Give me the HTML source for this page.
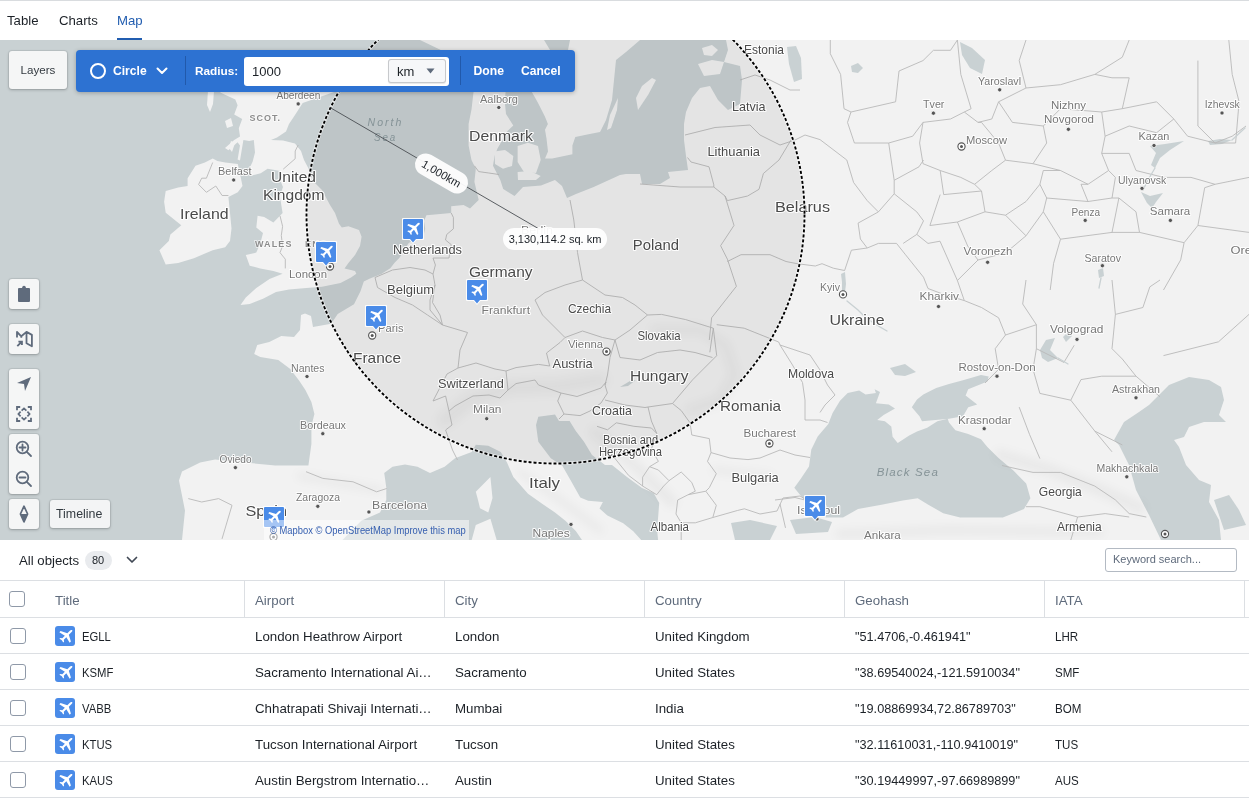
<!DOCTYPE html>
<html><head><meta charset="utf-8">
<style>
*{box-sizing:border-box;margin:0;padding:0}
html,body{width:1249px;height:798px;overflow:hidden;background:#fff;} body{font-family:"Liberation Sans",sans-serif;color:#1c2127}
.abs{position:absolute}
#topline{position:absolute;left:0;top:0;width:1249px;height:1px;background:#d9dcdf}
.tab{position:absolute;top:12px;font-size:13.2px;line-height:18px;color:#1c2127}
#map{position:absolute;left:0;top:40px;width:1249px;height:500px;overflow:hidden;background:#f2f2f2}
#map svg{position:absolute;left:0;top:0}
.btn{position:absolute;background:#f5f6f6;border-radius:3px;box-shadow:0 0 0 1px rgba(17,20,24,.06),0 1px 3px rgba(17,20,24,.25)}
#toolbar{position:absolute;left:76px;top:10px;width:499px;height:42px;background:#2d72d2;border-radius:4px;box-shadow:0 1px 4px rgba(0,0,0,.25)}
.tw{position:absolute;color:#fff;font-weight:bold;font-size:12px;line-height:16px}
.sep{position:absolute;top:6px;width:1px;height:29px;background:#2159ab}
#bar{position:absolute;left:0;top:540px;width:1249px;height:41px;background:#fff;border-bottom:1px solid #dcdfe3}
.hdr{position:absolute;top:581px;height:37px;border-bottom:1px solid #dcdfe3}
.ht{position:absolute;top:592.5px;font-size:13.3px;line-height:16px;color:#5f6b7c}
.vb{position:absolute;top:581px;width:1px;height:36px;background:#dcdfe3}
.row{position:absolute;left:0;width:1249px;height:1px;background:#dcdfe3}
.cb{position:absolute;width:16px;height:16px;border:1px solid #8f99a8;border-radius:3px;background:#fff}
.cell{position:absolute;font-size:13.3px;line-height:16px;color:#1c2127;white-space:nowrap}
.pl{position:absolute;width:20px;height:20px;border-radius:3px;background:#4a8be8}
.lbl{font-family:"Liberation Sans",sans-serif}
</style></head><body>
<div id="root" style="position:absolute;left:0;top:0;width:1249px;height:798px;will-change:transform">
<div id="topline"></div>
<div class="tab" style="left:7px">Table</div>
<div class="tab" style="left:59px">Charts</div>
<div class="tab" style="left:117px;color:#215db0">Map</div>
<div class="abs" style="left:117px;top:38px;width:25px;height:2px;background:#215db0"></div>

<div id="map">
<svg width="1249" height="540" viewBox="0 0 1249 540" style="top:-40px">
<g id="water" fill="#c9d1d3">
<path d="M0,40 L420,40 L445,52 L474,88 L471.5,109.6 L468.6,124 L468.6,145.6 L471.5,160 L475.8,168.7 L474.4,181.7 L478.7,200 L470,208.5 L463.6,205.1 L451.2,206.3 L451.2,213 L437.6,214.2 L426.4,215.3 L424,221 L425.2,228.8 L423,237.8 L412.8,240.1 L408.3,243.5 L403.8,251.4 L399.3,258.1 L394.8,262.6 L390.3,268.3 L381.3,274 L370,278.4 L363.8,281.4 L360.5,291.2 L354,304.2 L337.7,314 L331.2,323.8 L313,327 L311,316 L305,313.5 L301,315 L300,330 L294,337 L281.3,336 L269.3,342 L257.2,345 L254.2,354 L260.3,357 L278.3,360 L290.3,369 L299.4,381 L305.4,390 L311.4,402 L314.4,414 L311.4,426 L311.4,444 L308.4,465.5 L296.4,465.5 L275.3,465.5 L245.2,462.5 L215.1,459.4 L200.1,462.5 L182,471.5 L179,480.5 L185,510.6 L182,540 L0,540 Z"/>
<path d="M506,88 L504.7,101 L506,114 L513.3,125.5 L507.5,131 L497.5,148.5 L494.6,155.7 L493,165.8 L497.5,174.5 L500.3,180 L503.2,189 L514.5,196 L523,187 L541,185.5 L555,180 L562,186 L567,198 L576,194 L593.7,187 L620,175 L626,174 L640,174 L642,184 L660,184 L670,178 L668,172 L688,170 L686,156 L684,140 L684,124 L686,112 L692,98 L700,88 L710,86 L718,100 L728,110 L740,104 L742,80 L740,66 L724,62 L728,50 L726,40 L640,40 L626,52 L616,60 L614,80 L612,100 L606,120 L600,132 L589.7,134 L575.3,137 L572.4,145.6 L572.4,154.3 L552.2,158.6 L545,158.6 L548,151.4 L546.5,138.4 L545,129.8 L547.9,124 L545,116.8 L537.8,102.4 L532,92.3 L532,88 Z"/>
<path d="M342.5,540 L361.3,520.8 L380,512.5 L386.3,500 L386.3,487.5 L384.2,473 L392.5,466.7 L405,464.6 L417.5,466.7 L430,473 L444.6,466.7 L455,458.3 L471.7,452 L475.8,444.8 L488.3,445.8 L500.8,452 L507,462.5 L513.3,477 L528,493.8 L542.5,504 L555,512.5 L565.4,520.8 L575.8,531 L582,540 Z"/>
<path d="M536,425 L538.3,416.7 L555,414.6 L559,421 L569.6,421 L575.8,431 L584,441.7 L592,455 L605,465 L612,465 L627,477 L642,488 L653.6,492.9 L659.2,503 L658.1,517.7 L657,529 L658.1,540 L641.2,540 L633.3,531.2 L623.2,523.3 L607.4,515.4 L599.5,508.6 L602.9,501.9 L588.2,500.7 L580.3,497.4 L571.3,481.6 L562.3,465.8 L550.8,458.3 L538.3,441.7 Z"/>
<path d="M840,400.8 L847.7,393 L859.2,390.5 L865.6,394.4 L875.9,393 L874.6,389.2 L880,392 L875.9,403.3 L888.7,404.6 L895,408.5 L883.6,414.9 L877.2,420 L884.9,421.3 L891.3,426.4 L892.6,436.7 L897.7,443 L909.2,435.4 L917,431.5 L927.2,427.7 L937.4,421.3 L947.7,418.7 L949,422.6 L955.4,430.3 L968.2,434.1 L981,439.2 L987.4,447 L998.5,457.9 L1013.4,470.6 L1026.2,483.4 L1030.4,498.3 L1024,509 L1002.8,517.4 L981.5,517.4 L960.2,517.4 L943.2,513.2 L928.3,504.7 L917.7,498.3 L902.8,500.4 L881.5,504.7 L858,509 L843,517.4 L826,517.4 L815.5,509 L802.8,498.3 L794.3,487.7 L800.6,479 L809,466.4 L811.3,449.4 L817.7,436.6 L828.3,424 L832.6,413 Z"/>
<path d="M911.8,407.2 L917,399.5 L923.3,394.4 L936.2,388 L949,384.1 L963,380.3 L981,375 L988.7,376.4 L987.4,381.5 L968.2,389.2 L965.6,395.6 L977.2,404.6 L968.2,407.2 L963,416.2 L949,418.7 L922,421.3 L919.5,416.2 Z"/>
<path d="M1169,385 L1189,377 L1209,380 L1221,387 L1224,400 L1219,415 L1226,422 L1204,422 L1189,427 L1184,437 L1174,440 L1179,447 L1186,465 L1199,480 L1211,485 L1209,502 L1219,520 L1221,540 L1161,540 L1149,515 L1136,490 L1129,465 L1119,445 L1114,440 L1124,422 L1139,412 L1149,405 L1159,395 Z"/>
<path d="M1214,500 L1229,495 L1239,510 L1246,525 L1224,530 L1219,515 Z"/>
<path d="M731,523 L750,520 L777,526 L770,540 L735,540 Z"/>
<path d="M790,520 L815,517 L832,522 L828,532 L796,534 Z"/>
<path d="M960,42 L972,48 L985,60 L982,74 L970,68 L962,55 Z"/>
<path d="M851,66 L858,63 L863,68 L858,73 L852,72 Z"/>
<path d="M1150,146 L1165,144 L1184,141 L1170,150 L1160,158 L1155,168 L1151,165 L1156,153 Z"/>
<path d="M1141,192 L1150,196 L1163,193 L1156,202 L1152,208 L1147,203 Z"/>
<path d="M1208,141 L1220,139 L1232,140 L1222,144 L1210,145 Z"/>
<path d="M1040,350 L1046,340 L1055,338 L1050,350 L1058,358 L1048,362 L1042,358 Z"/>
<path d="M1063,337 L1070,330 L1072,336 L1066,342 Z"/>
<path d="M841,274 L845,272 L846,284 L845,292 L842,291 L842,282 Z"/>
<path d="M890,368 L905,364 L916,372 L905,376 L895,375 Z"/>
<path d="M1098,270 L1103,268 L1104,276 L1099,278 Z"/>
<path d="M787,47 L796,46 L801,58 L802,79 L794,82 L789,64 Z"/>
<path d="M620,387 L630,381 L636,380 L628,386 Z"/>

<path d="M544,40 L570,40 L568,50 L550,50 Z"/>
</g>
<g id="land" fill="#f2f2f2">
<path d="M208,91 L214,91 L213,104 L210,112 L207,105 Z"/><path d="M225,121 L231,118 L233,126 L227,128 Z"/><path d="M231,141 L235,143 L232,152 L229,148 Z"/>
<path d="M220,88 L336,88 L334,92 L302.7,103 L295,115 L289,124 L286,131.6 L277,137.6 L271,140 L283,140.6 L295,143.6 L301,151 L304,160 L308.8,169 L313,181 L322,190 L330,205 L335,213 L339,223.7 L341.8,227.6 L348.4,226.3 L359,230 L361.6,236.8 L360,246 L355,255 L348.4,263 L344.5,268.4 L355,271 L356.3,273.7 L351,277.6 L340.5,283 L322,286.8 L306.3,288 L289,289.5 L276,292 L263,298.7 L249.7,304 L240.5,305 L245.8,297.4 L256.3,288 L269.5,279 L282.6,273.7 L273.4,271 L260.3,268.4 L249.7,265.8 L245.8,255 L256.3,252.6 L260.3,243.4 L263,233 L256.3,227.6 L257.6,215.8 L264.2,217 L273.4,222.4 L282.6,213 L281.3,205 L280,196 L283,187 L280,179.7 L280.3,171 L267.6,168.7 L260.7,173.3 L251.5,175.6 L249.2,168.7 L252.6,161.8 L255,152.6 L253.8,139.9 L249.2,141 L243.4,139.9 L240,160.6 L237.6,159.5 L240,145.6 L237.6,142.2 L228.4,150.2 L225,148 L234.2,139.9 L240,136.4 L238.8,128.3 L242.2,119 L234.2,114.5 L237.6,105.3 L235.3,99.5 L220.3,92.6 L220,88 Z"/>
<path d="M187.6,178.2 L195.5,165.7 L204.9,162.5 L212.7,158.6 L217.4,161 L225.2,162.5 L237.8,164.1 L240.9,178.2 L242.5,186 L237.8,192.3 L228.4,197 L230,212.7 L231.5,228.4 L230,240.9 L225.2,247.2 L212.7,250.3 L193.9,258.2 L178.2,262.9 L165.7,264.4 L159.4,250.3 L168.8,240.9 L170.4,234.6 L181.3,225.2 L165.7,212.7 L164.1,201.7 L165.7,191 L178.2,187.6 L187.6,186 Z"/>
<path d="M494.6,151.4 L505,150 L513.3,156 L512,166 L503,168.7 L495,164 Z"/>
<path d="M517.6,146 L528,142.8 L538,146 L540.7,160 L536,173 L524,172 L517.6,162 Z"/>
<path d="M517.6,172 L530,171 L540.7,176 L536,180 L518,180 Z"/>
<path d="M607,130 L610,115 L618,98 L617,110 L611,128 Z"/>
<path d="M652,78 L656,80 L648,95 L638,110 L636,98 L642,86 Z"/>
<path d="M698,64 L712,60 L724,62 L720,74 L704,76 L701,70 Z"/><path d="M702,48 L712,45 L718,50 L712,56 L704,55 Z"/>
<path d="M475.8,491.7 L490.4,477 L492.5,498 L488.3,512.5 L480,508.3 L478,500 Z"/>
<path d="M475.8,525 L490.4,518.75 L496.7,540 L471.7,540 Z"/>
</g>

<defs><filter id="blr" x="-20%" y="-20%" width="140%" height="140%"><feGaussianBlur stdDeviation="4"/></filter></defs>
<g filter="url(#blr)" fill="none" stroke="#000" stroke-opacity="0.035" stroke-linecap="round" stroke-linejoin="round">
<polyline points="445,420 470,400 510,388 560,386 600,380" stroke-width="16"/>
<polyline points="655,330 700,330 725,345 735,375 720,400 690,410" stroke-width="10"/>
<polyline points="595,432 640,470 672,502" stroke-width="12"/>
<polyline points="715,470 770,476" stroke-width="7"/>
<polyline points="1000,455 1050,470 1100,490 1140,508" stroke-width="12"/>
<polyline points="300,476 380,490" stroke-width="7"/>
<polyline points="520,472 560,500 600,530" stroke-width="7"/>
<polyline points="840,534 950,530 1100,532" stroke-width="9"/>
</g>

<g fill="none" stroke="#b9b9b9" stroke-width="0.9" stroke-linejoin="round">
<polyline points="451.2,213 453.4,217.5 453.4,228.8 446.7,234.5 445.5,240 451.2,244.6 449,258 433,258 435.4,265 433,274 435,285 432.5,302.5 440,315 442.5,325"/>
<polyline points="375,277.5 392.5,270 410,267.5 425,270 433,274"/>
<polyline points="375,277.5 377.5,287.5 395,297.5 412.5,305 427.5,315 442.5,325"/>
<polyline points="435,285 430,300 430,310 442.5,325"/>
<polyline points="442.5,325 467.5,332.5 460,350 458,368"/>
<polyline points="458,368 447,374 433,401 445.6,396 449,411 452,425 445.6,430 452.5,450 457.5,460"/>
<polyline points="458,368 476,363 495,369 506,371 508,390"/>
<polyline points="506,371 516,367.6 538.5,364.4 549.7,366 546.5,353 560,342.5 565,337.5"/>
<polyline points="570,200 573.8,220 577.5,252.5 582.5,280"/>
<polyline points="582.5,280 565,285 545,292.5 535,300 542.5,315 557.5,330 565,337.5"/>
<polyline points="582.5,280 605,295 622.5,297.5 635,305 647.5,315"/>
<polyline points="565,337.5 582.5,331 602.5,337.5 615,340"/>
<polyline points="647.5,315 661.6,314.4 685.7,319.6 713.3,328.2"/>
<polyline points="647.5,315 630,330 615,340"/>
<polyline points="615,340 620,357.5 640,360 657.5,352.5 680,350 695,352.5 712.5,357.5"/>
<polyline points="615,340 610,357.5 607.5,375 605,385"/>
<polyline points="508,390 516,383.6 535,380 538.5,385 561,393 577,396.5 601,388 606,382 605,385"/>
<polyline points="508,390 500,398 489,395 473,396 455,406 449,411"/>
<polyline points="561,393 557.7,401 564,414 559,419"/>
<polyline points="564,414 580,415.6 590,411 601,403 607.4,393 605,385"/>
<polyline points="605,400 625,405 645,407.5 648,407"/>
<polyline points="672.5,403.5 692.6,379.8 716.7,355.7 713.3,328.2"/>
<polyline points="597,426.3 607.5,429.8 616.3,422.8 633.9,426.3 651.4,428 656.7,433.3 651.4,449 658.4,461.4 649.6,466.7 642.6,477.2 642.6,486"/>
<polyline points="614.6,458 628.6,475.4 642.6,486 656.7,494.7 663.7,486 669,480.7 658.4,470 649.6,466.7"/>
<polyline points="669,480.7 681.2,472 691.8,482.5 695.3,491.2 688.2,494.7 677.7,500 676,514 681.2,522.8 681.2,540"/>
<polyline points="688.2,494.7 705.8,491.2 716.3,505.3 712.8,517.5 695.3,522.8 681.2,522.8"/>
<polyline points="648,407 651.4,421 656.7,433.3"/>
<polyline points="713.3,328.2 709.8,352.3"/>
<polyline points="716.7,324.7 744.2,328.2 778.7,342 780,345"/>
<polyline points="648,407 672.5,403.5 681.2,410.5 690,422.8 691.8,435 709.3,438.6 711,452.6 707.5,461.4 716.3,473.7 709.3,487.7 705.8,491.2"/>
<polyline points="712.8,517.5 737.4,510.5 744.4,508.8 760,514 777,511 783,498 800,496 810,502"/>
<polyline points="780,504 785.5,527.9"/>
<polyline points="306,471.7 322.8,478.4 353,481.8 376.6,491.8 386.7,488.5"/>
<polyline points="188.3,498.6 201.7,502 218.6,498.6 232,505.3 222,538.9"/>
<polyline points="740,80 755,75 770,80 790,90 800,90"/>
<polyline points="685,135 715,127.5 750,125 760,135 780,145 795,140 805,135"/>
<polyline points="687.5,157.5 691,162 709,166.8 713.8,184.8 713.8,187"/>
<polyline points="640,184 680,187 713.8,187 725,196"/>
<polyline points="791,140 779,160 763.4,173.5 759,189.3 747.6,196 727.4,200.6 725,196"/>
<polyline points="725,196 734,225.4 720.6,245.7 727.4,259.2 736.4,286.3 711.6,317.8 709.3,340"/>
<polyline points="727.4,261.5 741,254.7 770,254.7 786,261.5 797.2,263.7 815.3,266 822,263.7 833.3,268.2 844.6,270.5 851.4,250.2 867.2,248 878.4,243.4 896.5,243.4 905.5,254.7 923.5,277.2 928,288.5 940,293"/>
<polyline points="298.2,145 295.2,151 295.2,158.7 283.2,169.2"/>
<polyline points="280,215.8 282.6,226.3 281.3,235.5 282.6,246 280,252.6 285.3,259.2 285.3,268.4"/>
<polyline points="212.7,162.5 206.4,178.2 201.7,178.2 198.6,184.5 206.4,192.3 215.8,186 222.1,195.5 228.4,195.5"/>
<polyline points="474.4,165.8 478.7,171.6 488.8,173 498.9,174.5"/>
<polyline points="805,135 820,139.6 846.8,160 853.6,182.5 867.2,200.6 878.4,211.9 858.1,223.1 860.4,239 867.2,248"/>
<polyline points="878.4,211.9 894.2,193.8 894.2,180.3 919,166.8 923.5,160"/>
<polyline points="894.2,193.8 916.8,211.9 923.5,220.9 916.8,234.4 903.2,243.4"/>
<polyline points="916.8,234.4 928,243.4 940,241.2"/>
<polyline points="830.3,40 830.3,53.7 840.6,74.4 844,108.7 851,112 895.6,101.8 899,71 923,60.6 933.4,50.3 950.5,50.3 957.4,40"/>
<polyline points="851,112 847.5,122.4 854.4,143 888.7,143 912.7,136.2 923,122.4 950.5,119 964.3,112 978,122.4 991.8,119 998.6,101.8 1026,88 1019.2,60.6 1026,40"/>
<polyline points="957.4,40 960.8,74.4 971.1,108.7 964.3,112"/>
<polyline points="923,122.4 919.6,143 923,163.7 940.2,170.5 960.8,177.4 974.6,184.3 991.8,170.5 1005.5,160.2 998.6,143 981.5,122.4 978,122.4"/>
<polyline points="1005.5,160.2 1033,163.7 1046.7,143 1043.3,126 1012.4,122.4 998.6,101.8"/>
<polyline points="1043.3,126 1060.5,108.7 1101.7,112 1105.1,136.2 1101.7,153.4 1108.6,170.5 1088,184.3 1060.5,170.5 1033,163.7"/>
<polyline points="1026,88 1060.5,84.7 1094.8,74.4 1122.3,57.2 1129.2,40"/>
<polyline points="1094.8,74.4 1112,77.8 1129.2,77.8 1122.3,108.7 1101.7,112"/>
<polyline points="1122.3,108.7 1156.6,101.8 1173.8,119 1187.6,136.2 1215,143 1232.2,136.2 1246,126"/>
<polyline points="1197.9,60.6 1197.9,126 1215,143 1235.6,143 1239.1,101.8 1232.2,74.4 1228.8,40"/>
<polyline points="1105.1,136.2 1129.2,126 1156.6,132.7 1173.8,119"/>
<polyline points="1101.7,153.4 1129.2,153.4 1136,170.5 1163.5,177.4 1191,177.4 1215,184.3 1249,177.4"/>
<polyline points="1108.6,170.5 1115.4,177.4 1112,198 1088,201.5 1081,184.3 1088,184.3"/>
<polyline points="1043.3,170.5 1039.9,184.3 1046.7,198 1088,201.5"/>
<polyline points="1060.5,170.5 1043.3,170.5"/>
<polyline points="974.6,184.3 981.5,191 985,211.8 1005.5,215.2 1026,201.5 1039.9,184.3"/>
<polyline points="940.2,170.5 943.7,194.6 981.5,191"/>
<polyline points="888.7,143 894.2,180.3"/>
<polyline points="940.2,194.6 929.9,225.5 957.4,222 985,211.8"/>
<polyline points="957.4,222 967.7,246 978,260 1005.5,253 1026,235.8 1005.5,215.2"/>
<polyline points="1026,235.8 1043.3,211.8 1046.7,198"/>
<polyline points="1043.3,211.8 1060.5,239.2 1112,232.4 1118.9,198 1112,198"/>
<polyline points="1118.9,198 1136,211.8 1139.5,232.4 1184.1,242.7 1197.9,225.5 1204.7,187.7 1215,184.3"/>
<polyline points="1060.5,239.2 1053.6,263.3 1050.2,290"/>
<polyline points="1112,232.4 1139.5,232.4"/>
<polyline points="1184.1,242.7 1180.7,259.9 1163.5,290"/>
<polyline points="1197.9,225.5 1249,232.4"/>
<polyline points="978,260 957.4,280.5"/>
<polyline points="940,241.2 957.4,280.5 964.3,300.6"/>
<polyline points="940,293 964.3,300.6 981.5,307.5 998.6,317.8 1005.5,335 995.2,348.7 998.6,369.3 985,383"/>
<polyline points="1026,280 1022.7,304 1036.4,324.7 1036.4,348.7 1063.9,362.4 1074.2,345.3"/>
<polyline points="1005.5,335 1036.4,324.7"/>
<polyline points="1036.4,348.7 1033,369.3 1039.9,393.4 1070.8,400.2 1094.8,431.1 1122.3,444.9"/>
<polyline points="1112,280 1115.4,314.4 1112,348.7 1122.3,359 1136,376.2 1160,396.8"/>
<polyline points="1115.4,314.4 1142.9,307.5 1149.8,286.9 1160,280"/>
<polyline points="1163.5,355.6 1218.5,341.8 1249,314.4"/>
<polyline points="1070.8,400.2 1081,379.6 1101.7,376.2 1136,376.2"/>
<polyline points="1019.2,407.1 1029.6,434.6 1039.9,458.6"/>
<polyline points="1002,465.5 1033,472.4 1060.5,472.4 1094.8,486.1 1115.4,499.9 1129.2,513.6 1146.3,517"/>
<polyline points="1094.8,431.1 1112,451.8"/>
<polyline points="1026,506.7 1039.9,506.7 1077.6,517 1105.1,513.6 1129.2,517"/>
<polyline points="1077.6,517 1070.8,540"/>
<polyline points="780,345 792.5,365 802.5,382.5 805,400 805,420 820,420 827.5,422.5"/>
<polyline points="780,345 810,355 820,370 827.5,385 835,395 825,405 820,412.5"/>
<polyline points="711,452.6 730,458 748,459.6 760,458 780,450 795,455 810,457.5"/>
<polyline points="775,500 795,497.5 805,500"/>
</g>
<g fill="none" stroke="#c9d1d3" stroke-width="1.3" stroke-linecap="round">
<polyline points="1155,168 1148,180 1143,190"/>
<polyline points="1152,208 1158,214"/>
<polyline points="1101,278 1099,288"/>
<polyline points="1058,358 1068,364"/>
<polyline points="847,301 858,310 866,318 880,327 887,331"/>
<polyline points="1232,140 1245,128"/>
</g>
<circle cx="555.5" cy="214.5" r="249" fill="rgba(0,0,0,0.055)"/>
<g font-family="Liberation Sans" paint-order="stroke" stroke="#fff" stroke-linejoin="round">
<text x="271" y="181.5" font-size="14.5" fill="#4a4a4a" stroke-width="2.2" stroke-opacity="0.9" textLength="45.0" lengthAdjust="spacingAndGlyphs">United</text>
<text x="263" y="200" font-size="14.5" fill="#4a4a4a" stroke-width="2.2" stroke-opacity="0.9" textLength="61.5" lengthAdjust="spacingAndGlyphs">Kingdom</text>
<text x="180" y="218.5" font-size="14.5" fill="#4a4a4a" stroke-width="2.2" stroke-opacity="0.9" textLength="48.6" lengthAdjust="spacingAndGlyphs">Ireland</text>
<text x="469" y="141" font-size="14.5" fill="#4a4a4a" stroke-width="2.2" stroke-opacity="0.9" textLength="64.0" lengthAdjust="spacingAndGlyphs">Denmark</text>
<text x="775" y="211.5" font-size="14.5" fill="#4a4a4a" stroke-width="2.2" stroke-opacity="0.9" textLength="55.0" lengthAdjust="spacingAndGlyphs">Belarus</text>
<text x="632.8" y="249.8" font-size="15" fill="#4a4a4a" stroke-width="2.2" stroke-opacity="0.9" textLength="46.2" lengthAdjust="spacingAndGlyphs">Poland</text>
<text x="469" y="276.5" font-size="14.5" fill="#4a4a4a" stroke-width="2.2" stroke-opacity="0.9" textLength="63.5" lengthAdjust="spacingAndGlyphs">Germany</text>
<text x="393" y="254" font-size="13" fill="#4a4a4a" stroke-width="2.2" stroke-opacity="0.9" textLength="69.0" lengthAdjust="spacingAndGlyphs">Netherlands</text>
<text x="387" y="293.5" font-size="13" fill="#4a4a4a" stroke-width="2.2" stroke-opacity="0.9" textLength="47.0" lengthAdjust="spacingAndGlyphs">Belgium</text>
<text x="568" y="313" font-size="13" fill="#4a4a4a" stroke-width="2.2" stroke-opacity="0.9" textLength="43.0" lengthAdjust="spacingAndGlyphs">Czechia</text>
<text x="637.5" y="339.5" font-size="13" fill="#4a4a4a" stroke-width="2.2" stroke-opacity="0.9" textLength="43.0" lengthAdjust="spacingAndGlyphs">Slovakia</text>
<text x="552.5" y="367.5" font-size="13" fill="#4a4a4a" stroke-width="2.2" stroke-opacity="0.9" textLength="40.3" lengthAdjust="spacingAndGlyphs">Austria</text>
<text x="630" y="380.5" font-size="15" fill="#4a4a4a" stroke-width="2.2" stroke-opacity="0.9" textLength="58.5" lengthAdjust="spacingAndGlyphs">Hungary</text>
<text x="437.9" y="388" font-size="13" fill="#4a4a4a" stroke-width="2.2" stroke-opacity="0.9" textLength="66.1" lengthAdjust="spacingAndGlyphs">Switzerland</text>
<text x="353" y="363" font-size="15" fill="#4a4a4a" stroke-width="2.2" stroke-opacity="0.9" textLength="48.0" lengthAdjust="spacingAndGlyphs">France</text>
<text x="592" y="414.5" font-size="13" fill="#4a4a4a" stroke-width="2.2" stroke-opacity="0.9" textLength="40.0" lengthAdjust="spacingAndGlyphs">Croatia</text>
<text x="720" y="411" font-size="15" fill="#4a4a4a" stroke-width="2.2" stroke-opacity="0.9" textLength="61.0" lengthAdjust="spacingAndGlyphs">Romania</text>
<text x="788" y="378" font-size="13" fill="#4a4a4a" stroke-width="2.2" stroke-opacity="0.9" textLength="46.0" lengthAdjust="spacingAndGlyphs">Moldova</text>
<text x="603" y="443.5" font-size="12.5" fill="#4a4a4a" stroke-width="2.2" stroke-opacity="0.9" textLength="55.0" lengthAdjust="spacingAndGlyphs">Bosnia and</text>
<text x="599" y="455.5" font-size="12.5" fill="#4a4a4a" stroke-width="2.2" stroke-opacity="0.9" textLength="63.0" lengthAdjust="spacingAndGlyphs">Herzegovina</text>
<text x="529" y="488" font-size="15" fill="#4a4a4a" stroke-width="2.2" stroke-opacity="0.9" textLength="31.0" lengthAdjust="spacingAndGlyphs">Italy</text>
<text x="731.5" y="481.5" font-size="13" fill="#4a4a4a" stroke-width="2.2" stroke-opacity="0.9" textLength="47.2" lengthAdjust="spacingAndGlyphs">Bulgaria</text>
<text x="650.6" y="530.5" font-size="12.5" fill="#4a4a4a" stroke-width="2.2" stroke-opacity="0.9" textLength="38.4" lengthAdjust="spacingAndGlyphs">Albania</text>
<text x="829.6" y="325" font-size="15" fill="#4a4a4a" stroke-width="2.2" stroke-opacity="0.9" textLength="55.0" lengthAdjust="spacingAndGlyphs">Ukraine</text>
<text x="1038.8" y="496" font-size="13" fill="#4a4a4a" stroke-width="2.2" stroke-opacity="0.9" textLength="43.0" lengthAdjust="spacingAndGlyphs">Georgia</text>
<text x="1057" y="531" font-size="12.5" fill="#4a4a4a" stroke-width="2.2" stroke-opacity="0.9" textLength="44.7" lengthAdjust="spacingAndGlyphs">Armenia</text>
<text x="245.5" y="516" font-size="15" fill="#4a4a4a" stroke-width="2.2" stroke-opacity="0.9" textLength="41.5" lengthAdjust="spacingAndGlyphs">Spain</text>
<text x="732" y="110.5" font-size="13" fill="#4a4a4a" stroke-width="2.2" stroke-opacity="0.9" textLength="33.6" lengthAdjust="spacingAndGlyphs">Latvia</text>
<text x="707.4" y="155.5" font-size="13" fill="#4a4a4a" stroke-width="2.2" stroke-opacity="0.9" textLength="52.6" lengthAdjust="spacingAndGlyphs">Lithuania</text>
<text x="744" y="54" font-size="13" fill="#4a4a4a" stroke-width="2.2" stroke-opacity="0.9" textLength="40.0" lengthAdjust="spacingAndGlyphs">Estonia</text>
<text x="276.4" y="99" font-size="11.5" fill="#777777" stroke-width="2" stroke-opacity="0.9" textLength="44.0" lengthAdjust="spacingAndGlyphs">Aberdeen</text>
<text x="218" y="175" font-size="11.5" fill="#777777" stroke-width="2" stroke-opacity="0.9" textLength="33.5" lengthAdjust="spacingAndGlyphs">Belfast</text>
<text x="289" y="277.5" font-size="11.5" fill="#777777" stroke-width="2" stroke-opacity="0.9" textLength="38.0" lengthAdjust="spacingAndGlyphs">London</text>
<text x="480" y="102.5" font-size="11.5" fill="#777777" stroke-width="2" stroke-opacity="0.9" textLength="38.0" lengthAdjust="spacingAndGlyphs">Aalborg</text>
<text x="481.6" y="314" font-size="11.5" fill="#777777" stroke-width="2" stroke-opacity="0.9" textLength="48.4" lengthAdjust="spacingAndGlyphs">Frankfurt</text>
<text x="568" y="348" font-size="11.5" fill="#777777" stroke-width="2" stroke-opacity="0.9" textLength="35.0" lengthAdjust="spacingAndGlyphs">Vienna</text>
<text x="473" y="413" font-size="11.5" fill="#777777" stroke-width="2" stroke-opacity="0.9" textLength="28.5" lengthAdjust="spacingAndGlyphs">Milan</text>
<text x="378" y="332" font-size="11.5" fill="#777777" stroke-width="2" stroke-opacity="0.9" textLength="25.5" lengthAdjust="spacingAndGlyphs">Paris</text>
<text x="291" y="371.5" font-size="11.5" fill="#777777" stroke-width="2" stroke-opacity="0.9" textLength="33.5" lengthAdjust="spacingAndGlyphs">Nantes</text>
<text x="300" y="428.5" font-size="11.5" fill="#777777" stroke-width="2" stroke-opacity="0.9" textLength="46.0" lengthAdjust="spacingAndGlyphs">Bordeaux</text>
<text x="219.6" y="463" font-size="11.5" fill="#777777" stroke-width="2" stroke-opacity="0.9" textLength="31.9" lengthAdjust="spacingAndGlyphs">Oviedo</text>
<text x="296" y="500.5" font-size="11.5" fill="#777777" stroke-width="2" stroke-opacity="0.9" textLength="44.0" lengthAdjust="spacingAndGlyphs">Zaragoza</text>
<text x="372" y="509" font-size="11.5" fill="#777777" stroke-width="2" stroke-opacity="0.9" textLength="55.0" lengthAdjust="spacingAndGlyphs">Barcelona</text>
<text x="743.5" y="437" font-size="11.5" fill="#777777" stroke-width="2" stroke-opacity="0.9" textLength="52.5" lengthAdjust="spacingAndGlyphs">Bucharest</text>
<text x="532.5" y="537" font-size="11.5" fill="#777777" stroke-width="2" stroke-opacity="0.9" textLength="37.2" lengthAdjust="spacingAndGlyphs">Naples</text>
<text x="797" y="514" font-size="11.5" fill="#777777" stroke-width="2" stroke-opacity="0.9" textLength="43.0" lengthAdjust="spacingAndGlyphs">Istanbul</text>
<text x="978" y="85.4" font-size="11.5" fill="#777777" stroke-width="2" stroke-opacity="0.9" textLength="43.0" lengthAdjust="spacingAndGlyphs">Yaroslavl</text>
<text x="923" y="108.4" font-size="11.5" fill="#777777" stroke-width="2" stroke-opacity="0.9" textLength="21.4" lengthAdjust="spacingAndGlyphs">Tver</text>
<text x="1051" y="109" font-size="11.5" fill="#777777" stroke-width="2" stroke-opacity="0.9" textLength="35.0" lengthAdjust="spacingAndGlyphs">Nizhny</text>
<text x="1044" y="123" font-size="11.5" fill="#777777" stroke-width="2" stroke-opacity="0.9" textLength="50.0" lengthAdjust="spacingAndGlyphs">Novgorod</text>
<text x="1204.7" y="108.4" font-size="11.5" fill="#777777" stroke-width="2" stroke-opacity="0.9" textLength="35.1" lengthAdjust="spacingAndGlyphs">Izhevsk</text>
<text x="966" y="143.5" font-size="11.5" fill="#777777" stroke-width="2" stroke-opacity="0.9" textLength="41.0" lengthAdjust="spacingAndGlyphs">Moscow</text>
<text x="1138.5" y="140" font-size="11.5" fill="#777777" stroke-width="2" stroke-opacity="0.9" textLength="30.9" lengthAdjust="spacingAndGlyphs">Kazan</text>
<text x="1118" y="183.5" font-size="11.5" fill="#777777" stroke-width="2" stroke-opacity="0.9" textLength="48.3" lengthAdjust="spacingAndGlyphs">Ulyanovsk</text>
<text x="1071.5" y="216" font-size="11.5" fill="#777777" stroke-width="2" stroke-opacity="0.9" textLength="28.5" lengthAdjust="spacingAndGlyphs">Penza</text>
<text x="1149.8" y="215" font-size="11.5" fill="#777777" stroke-width="2" stroke-opacity="0.9" textLength="40.5" lengthAdjust="spacingAndGlyphs">Samara</text>
<text x="963.6" y="255" font-size="11.5" fill="#777777" stroke-width="2" stroke-opacity="0.9" textLength="48.8" lengthAdjust="spacingAndGlyphs">Voronezh</text>
<text x="1084.5" y="261.5" font-size="11.5" fill="#777777" stroke-width="2" stroke-opacity="0.9" textLength="36.5" lengthAdjust="spacingAndGlyphs">Saratov</text>
<text x="1230.5" y="253.5" font-size="11.5" fill="#777777" stroke-width="2" stroke-opacity="0.9" textLength="21.5" lengthAdjust="spacingAndGlyphs">Ore</text>
<text x="820" y="291" font-size="11.5" fill="#777777" stroke-width="2" stroke-opacity="0.9" textLength="20.0" lengthAdjust="spacingAndGlyphs">Kyiv</text>
<text x="919.6" y="300.3" font-size="11.5" fill="#777777" stroke-width="2" stroke-opacity="0.9" textLength="39.4" lengthAdjust="spacingAndGlyphs">Kharkiv</text>
<text x="1050" y="333" font-size="11.5" fill="#777777" stroke-width="2" stroke-opacity="0.9" textLength="53.4" lengthAdjust="spacingAndGlyphs">Volgograd</text>
<text x="958.4" y="371" font-size="11.5" fill="#777777" stroke-width="2" stroke-opacity="0.9" textLength="77.3" lengthAdjust="spacingAndGlyphs">Rostov-on-Don</text>
<text x="1112" y="393" font-size="11.5" fill="#777777" stroke-width="2" stroke-opacity="0.9" textLength="48.0" lengthAdjust="spacingAndGlyphs">Astrakhan</text>
<text x="958" y="424" font-size="11.5" fill="#777777" stroke-width="2" stroke-opacity="0.9" textLength="53.7" lengthAdjust="spacingAndGlyphs">Krasnodar</text>
<text x="1096.5" y="472" font-size="11.5" fill="#777777" stroke-width="2" stroke-opacity="0.9" textLength="61.9" lengthAdjust="spacingAndGlyphs">Makhachkala</text>
<text x="864" y="539" font-size="11.5" fill="#777777" stroke-width="2" stroke-opacity="0.9" textLength="36.7" lengthAdjust="spacingAndGlyphs">Ankara</text>
<text x="521" y="234" font-size="11.5" fill="#777777" stroke-width="2" stroke-opacity="0.9" textLength="32.0" lengthAdjust="spacingAndGlyphs">Berlin</text>
</g>
<g font-family="Liberation Sans" font-style="italic" fill="#859397" font-size="11.5" letter-spacing="2.2">
<text x="367.5" y="125.5" textLength="36" lengthAdjust="spacingAndGlyphs">North</text><text x="374" y="141" textLength="23" lengthAdjust="spacingAndGlyphs">Sea</text>
<text x="876.7" y="475.5" textLength="63.3" lengthAdjust="spacing">Black Sea</text>
</g>
<g font-family="Liberation Sans" fill="#8c8c8c" font-size="9" font-weight="bold" paint-order="stroke" stroke="#fff" stroke-width="1.5" stroke-opacity="0.7">
<text x="249.5" y="120.5" textLength="30.5" lengthAdjust="spacing">SCOT.</text>
<text x="255" y="246.8" textLength="36.5" lengthAdjust="spacing">WALES</text>
<text x="305" y="246.8" textLength="22" lengthAdjust="spacing">ENG</text>
</g>
<g fill="#555">
<circle cx="298.2" cy="103.9" r="2.1" stroke="#fff" stroke-width="1" stroke-opacity="0.7"/>
<circle cx="233.7" cy="180" r="2.1" stroke="#fff" stroke-width="1" stroke-opacity="0.7"/>
<circle cx="498.8" cy="107.5" r="2.1" stroke="#fff" stroke-width="1" stroke-opacity="0.7"/>
<circle cx="307" cy="376.5" r="2.1" stroke="#fff" stroke-width="1" stroke-opacity="0.7"/>
<circle cx="322.8" cy="433.7" r="2.1" stroke="#fff" stroke-width="1" stroke-opacity="0.7"/>
<circle cx="235.4" cy="467.6" r="2.1" stroke="#fff" stroke-width="1" stroke-opacity="0.7"/>
<circle cx="317.8" cy="506.3" r="2.1" stroke="#fff" stroke-width="1" stroke-opacity="0.7"/>
<circle cx="368.9" cy="512" r="2.1" stroke="#fff" stroke-width="1" stroke-opacity="0.7"/>
<circle cx="486.7" cy="418.7" r="2.1" stroke="#fff" stroke-width="1" stroke-opacity="0.7"/>
<circle cx="571" cy="524.4" r="2.1" stroke="#fff" stroke-width="1" stroke-opacity="0.7"/>
<circle cx="999.7" cy="89.8" r="2.1" stroke="#fff" stroke-width="1" stroke-opacity="0.7"/>
<circle cx="933.4" cy="113.2" r="2.1" stroke="#fff" stroke-width="1" stroke-opacity="0.7"/>
<circle cx="1068.4" cy="129.3" r="2.1" stroke="#fff" stroke-width="1" stroke-opacity="0.7"/>
<circle cx="1222" cy="113" r="2.1" stroke="#fff" stroke-width="1" stroke-opacity="0.7"/>
<circle cx="1154" cy="145.5" r="2.1" stroke="#fff" stroke-width="1" stroke-opacity="0.7"/>
<circle cx="1142" cy="188.4" r="2.1" stroke="#fff" stroke-width="1" stroke-opacity="0.7"/>
<circle cx="1085.2" cy="220.4" r="2.1" stroke="#fff" stroke-width="1" stroke-opacity="0.7"/>
<circle cx="1170.4" cy="220.4" r="2.1" stroke="#fff" stroke-width="1" stroke-opacity="0.7"/>
<circle cx="987.6" cy="262.3" r="2.1" stroke="#fff" stroke-width="1" stroke-opacity="0.7"/>
<circle cx="1102.4" cy="265.7" r="2.1" stroke="#fff" stroke-width="1" stroke-opacity="0.7"/>
<circle cx="938.5" cy="306.5" r="2.1" stroke="#fff" stroke-width="1" stroke-opacity="0.7"/>
<circle cx="1077" cy="339.4" r="2.1" stroke="#fff" stroke-width="1" stroke-opacity="0.7"/>
<circle cx="997" cy="376.2" r="2.1" stroke="#fff" stroke-width="1" stroke-opacity="0.7"/>
<circle cx="1136" cy="397.8" r="2.1" stroke="#fff" stroke-width="1" stroke-opacity="0.7"/>
<circle cx="984.2" cy="428.7" r="2.1" stroke="#fff" stroke-width="1" stroke-opacity="0.7"/>
<circle cx="1126.8" cy="476.8" r="2.1" stroke="#fff" stroke-width="1" stroke-opacity="0.7"/>
<circle cx="817" cy="519" r="2.1" stroke="#fff" stroke-width="1" stroke-opacity="0.7"/>
<circle cx="905" cy="545" r="2.1" stroke="#fff" stroke-width="1" stroke-opacity="0.7"/>
</g><g>
<circle cx="606.5" cy="351.6" r="3.6" fill="#fff" stroke="#555" stroke-width="1.1"/><circle cx="606.5" cy="351.6" r="1.5" fill="#555"/>
<circle cx="769.4" cy="443.5" r="3.6" fill="#fff" stroke="#555" stroke-width="1.1"/><circle cx="769.4" cy="443.5" r="1.5" fill="#555"/>
<circle cx="843" cy="294.4" r="3.6" fill="#fff" stroke="#555" stroke-width="1.1"/><circle cx="843" cy="294.4" r="1.5" fill="#555"/>
<circle cx="961.5" cy="146.5" r="3.6" fill="#fff" stroke="#555" stroke-width="1.1"/><circle cx="961.5" cy="146.5" r="1.5" fill="#555"/>
<circle cx="330" cy="266.5" r="3.6" fill="#fff" stroke="#555" stroke-width="1.1"/><circle cx="330" cy="266.5" r="1.5" fill="#555"/>
<circle cx="372.2" cy="335.5" r="3.6" fill="#fff" stroke="#555" stroke-width="1.1"/><circle cx="372.2" cy="335.5" r="1.5" fill="#555"/>
<circle cx="1165" cy="534" r="3.6" fill="#fff" stroke="#555" stroke-width="1.1"/><circle cx="1165" cy="534" r="1.5" fill="#555"/>
<circle cx="273.5" cy="537" r="3.6" fill="#fff" stroke="#555" stroke-width="1.1"/><circle cx="273.5" cy="537" r="1.5" fill="#555"/>
</g>
<g>
<circle cx="555.5" cy="214.5" r="249" fill="none" stroke="#fff" stroke-width="3.2" stroke-opacity="0.55"/>
<circle cx="555.5" cy="214.5" r="249" fill="none" stroke="#000" stroke-width="1.9" stroke-dasharray="3 2"/>
<line x1="330" y1="107.5" x2="540" y2="229.5" stroke="#4a4e52" stroke-width="0.9"/>
<g transform="translate(441.5,173.5) rotate(30.2)">
<rect x="-29" y="-11" width="58" height="22" rx="11" fill="#fff" fill-opacity="0.93"/>
<text x="0" y="4.2" text-anchor="middle" font-family="Liberation Sans" font-size="11.2" fill="#1c2127">1,000km</text>
</g>
<rect x="503" y="228" width="104" height="22" rx="11" fill="#fff" fill-opacity="0.93"/>
<text x="555" y="243" text-anchor="middle" font-family="Liberation Sans" font-size="11" fill="#1c2127">3,130,114.2 sq. km</text>
</g>

<defs>
<g id="mk">
<path d="M-1,-1 L20,-1 Q21,-1 21,0 L21,20 Q21,21 20,21 L13.5,21 L10,25 L6.5,21 L0,21 Q-1,21 -1,20 L-1,0 Q-1,-1 0,-1 Z" fill="#fff" fill-opacity="0.9"/>
<path d="M1,0 L19,0 Q20,0 20,1 L20,19 Q20,20 19,20 L13,20 L10,23.5 L7,20 L1,20 Q0,20 0,19 L0,1 Q0,0 1,0 Z" fill="#4a8be8"/>
<g transform="translate(2,2) scale(0.68)"><path fill="#fff" d="M21.5,3.2 C20.7,2.4 19.4,2.5 18.5,3.4 L14.6,7.3 L5,4.4 L3.3,6.1 L11.1,10.8 L7.5,14.4 L4.6,14 L3.4,15.2 L6.8,17.2 L8.8,20.6 L10,19.4 L9.6,16.5 L13.2,12.9 L17.9,20.7 L19.6,19 L16.7,9.4 L20.6,5.5 C21.5,4.6 22.3,4 21.5,3.2 Z"/></g>
</g>
</defs>
<use href="#mk" x="316" y="242"/>
<use href="#mk" x="403" y="219"/>
<use href="#mk" x="366" y="306"/>
<use href="#mk" x="467" y="280"/>
<use href="#mk" x="264" y="507"/>
<use href="#mk" x="805" y="496"/>

</svg>
<div class="btn" style="left:9px;top:10.5px;width:57.5px;height:38.5px"></div>
<div class="abs" style="left:20.5px;top:23px;font-size:11.6px;line-height:14px;color:#333a40">Layers</div>
<div id="toolbar">
 <div class="abs" style="left:14px;top:13px;width:16px;height:16px;border:2px solid #fff;border-radius:50%"></div>
 <div class="tw" style="left:37px;top:13px;font-size:12.1px">Circle</div>
 <svg class="abs" style="left:80px;top:17px" width="12" height="8" viewBox="0 0 12 8"><path d="M1.5,1.5 L6,6 L10.5,1.5" fill="none" stroke="#fff" stroke-width="2" stroke-linecap="round" stroke-linejoin="round"/></svg>
 <div class="sep" style="left:108.5px"></div>
 <div class="tw" style="left:119px;top:13px;font-size:11.8px">Radius:</div>
 <div class="abs" style="left:168px;top:6.5px;width:205px;height:29px;background:#fff;border-radius:3px"></div>
 <div class="abs" style="left:176px;top:14px;font-size:13px;line-height:15px;color:#1c2127">1000</div>
 <div class="abs" style="left:312px;top:8.5px;width:58px;height:24.5px;background:#f6f7f9;border-radius:3px;box-shadow:inset 0 0 0 1px rgba(17,20,24,.2),0 1px 1px rgba(17,20,24,.1)"></div>
 <div class="abs" style="left:321px;top:13.5px;font-size:13px;line-height:15px;color:#1c2127">km</div>
 <svg class="abs" style="left:350px;top:18px" width="9" height="6" viewBox="0 0 9 6"><path d="M0.5,0.5 L8.5,0.5 L4.5,5.5 Z" fill="#5f6b7c"/></svg>
 <div class="sep" style="left:383.5px"></div>
 <div class="tw" style="left:397.5px;top:13px;font-size:12.2px">Done</div>
 <div class="tw" style="left:445px;top:13px;font-size:12.1px">Cancel</div>
</div>
<!-- left controls -->
<div class="btn" style="left:9px;top:239px;width:30px;height:30px"></div>
<svg class="abs" style="left:17px;top:245px" width="14" height="18" viewBox="0 0 14 18"><path d="M2,3 L5,3 L5.5,1.5 Q7,0 8.5,1.5 L9,3 L12,3 Q13,3 13,4 L13,16 Q13,17 12,17 L2,17 Q1,17 1,16 L1,4 Q1,3 2,3 Z" fill="#5f6b7c"/></svg>
<div class="btn" style="left:9px;top:284px;width:30px;height:30px"></div>
<svg class="abs" style="left:15px;top:290px" width="18" height="18" viewBox="0 0 18 18"><path d="M2,7.6 L2,2 L6.3,6.3 L11.5,1.9 L16.9,4.9 L16.9,16.3 L11.5,13.3 L11.5,1.9 M6.3,6.3 L6.3,7.8" fill="none" stroke="#5f6b7c" stroke-width="1.8" stroke-linejoin="round"/><path d="M2.3,16.2 L6.6,11.9 M3.4,11.6 L6.9,11.6 L6.9,15.1" fill="none" stroke="#5f6b7c" stroke-width="1.9"/></svg>
<div class="btn" style="left:9px;top:329px;width:30px;height:60px"></div>
<svg class="abs" style="left:16px;top:336px" width="16" height="16" viewBox="0 0 16 16"><path d="M1,7 L15,1 L9,15 L8,8 Z" fill="#5f6b7c"/></svg>
<svg class="abs" style="left:16px;top:366px" width="16" height="16" viewBox="0 0 16 16"><path d="M1,4.2 L1,1 L4.2,1 M11.8,1 L15,1 L15,4.2 M15,11.8 L15,15 L11.8,15 M4.2,15 L1,15 L1,11.8" fill="none" stroke="#5f6b7c" stroke-width="1.8"/><path d="M5.6,4.6 L8,2.4 L10.4,4.6 M4.6,5.6 L2.4,8 L4.6,10.4 M11.4,5.6 L13.6,8 L11.4,10.4 M5.6,11.4 L8,13.6 L10.4,11.4" fill="none" stroke="#5f6b7c" stroke-width="1.7"/></svg>
<div class="btn" style="left:9px;top:394px;width:30px;height:60px"></div>
<svg class="abs" style="left:15px;top:400px" width="18" height="18" viewBox="0 0 18 18"><circle cx="7.5" cy="7.5" r="5.8" fill="none" stroke="#5f6b7c" stroke-width="1.8"/><path d="M11.8,11.8 L16,16 M7.5,4.5 L7.5,10.5 M4.5,7.5 L10.5,7.5" stroke="#5f6b7c" stroke-width="1.8" stroke-linecap="round"/></svg>
<svg class="abs" style="left:15px;top:430px" width="18" height="18" viewBox="0 0 18 18"><circle cx="7.5" cy="7.5" r="5.8" fill="none" stroke="#5f6b7c" stroke-width="1.8"/><path d="M11.8,11.8 L16,16 M4.5,7.5 L10.5,7.5" stroke="#5f6b7c" stroke-width="1.8" stroke-linecap="round"/></svg>
<div class="btn" style="left:9px;top:459px;width:30px;height:30px"></div>
<svg class="abs" style="left:18px;top:465px" width="12" height="18" viewBox="0 0 12 18"><path d="M6,1.2 L9.6,9 L6,16.8 L2.4,9 Z" fill="none" stroke="#5f6b7c" stroke-width="1.7" stroke-linejoin="round"/><path d="M9.6,9 L6,16.8 L2.4,9 Z" fill="#5f6b7c"/></svg>
<div class="btn" style="left:50px;top:460px;width:60px;height:28px;background:#f3f4f5"></div>
<div class="abs" style="left:56px;top:467px;font-size:12.4px;line-height:14px;color:#333a40">Timeline</div>
<!-- attribution -->
<div class="abs" style="left:264px;top:480px;width:205px;height:20px;background:rgba(255,255,255,0.5)"></div>
<div class="abs" style="left:270px;top:484px;font-size:10.6px;line-height:12px;color:#3760b0;white-space:nowrap;transform:scaleX(0.885);transform-origin:0 0">© Mapbox © OpenStreetMap Improve this map</div>

</div>

<div id="bar"></div>
<div class="abs" style="left:19px;top:553px;font-size:13.2px;line-height:16px;color:#1c2127">All objects</div>
<div class="abs" style="left:84.5px;top:550.5px;width:27px;height:19.5px;border-radius:10px;background:#e9ebee"></div>
<div class="abs" style="left:92px;top:554px;font-size:11px;line-height:13px;color:#1c2127">80</div>
<svg class="abs" style="left:126px;top:556px" width="12" height="8" viewBox="0 0 12 8"><path d="M1.5,1.5 L6,6 L10.5,1.5" fill="none" stroke="#404854" stroke-width="1.7" stroke-linecap="round" stroke-linejoin="round"/></svg>
<div class="abs" style="left:1104.5px;top:548px;width:132.5px;height:24px;border:1px solid #b3bac3;border-radius:3px;background:#fff"></div>
<div class="abs" style="left:1113px;top:553px;font-size:11px;line-height:13px;color:#5f6b7c">Keyword search...</div>
<div class="cb" style="left:9px;top:591px"></div>
<div class="ht" style="left:55px">Title</div>
<div class="ht" style="left:255px">Airport</div>
<div class="ht" style="left:455px">City</div>
<div class="ht" style="left:655px">Country</div>
<div class="ht" style="left:855px">Geohash</div>
<div class="ht" style="left:1055px">IATA</div>
<div class="vb" style="left:244px"></div>
<div class="vb" style="left:444px"></div>
<div class="vb" style="left:644px"></div>
<div class="vb" style="left:844px"></div>
<div class="vb" style="left:1044px"></div>
<div class="vb" style="left:1244px"></div>
<div class="row" style="top:617px"></div>
<div class="cb" style="left:10px;top:628px"></div>
<div class="pl" style="left:55px;top:626px"><div class="abs" style="left:1.5px;top:1.5px"><svg width="17" height="17" viewBox="0 0 24 24"><path fill="#fff" d="M21.5,3.2 C20.7,2.4 19.4,2.5 18.5,3.4 L14.6,7.3 L5,4.4 L3.3,6.1 L11.1,10.8 L7.5,14.4 L4.6,14 L3.4,15.2 L6.8,17.2 L8.8,20.6 L10,19.4 L9.6,16.5 L13.2,12.9 L17.9,20.7 L19.6,19 L16.7,9.4 L20.6,5.5 C21.5,4.6 22.3,4 21.5,3.2 Z"/></svg></div></div>
<div class="cell" style="left:81.5px;top:628.8px;transform:scaleX(0.85);transform-origin:0 0">EGLL</div>
<div class="cell" style="left:255px;top:628.8px">London Heathrow Airport</div>
<div class="cell" style="left:455px;top:628.8px">London</div>
<div class="cell" style="left:655px;top:628.8px">United Kingdom</div>
<div class="cell" style="left:855px;top:628.8px;font-size:12.7px">"51.4706,-0.461941"</div>
<div class="cell" style="left:1055px;top:628.8px;transform:scaleX(0.87);transform-origin:0 0">LHR</div>
<div class="row" style="top:653px"></div>
<div class="cb" style="left:10px;top:664px"></div>
<div class="pl" style="left:55px;top:662px"><div class="abs" style="left:1.5px;top:1.5px"><svg width="17" height="17" viewBox="0 0 24 24"><path fill="#fff" d="M21.5,3.2 C20.7,2.4 19.4,2.5 18.5,3.4 L14.6,7.3 L5,4.4 L3.3,6.1 L11.1,10.8 L7.5,14.4 L4.6,14 L3.4,15.2 L6.8,17.2 L8.8,20.6 L10,19.4 L9.6,16.5 L13.2,12.9 L17.9,20.7 L19.6,19 L16.7,9.4 L20.6,5.5 C21.5,4.6 22.3,4 21.5,3.2 Z"/></svg></div></div>
<div class="cell" style="left:81.5px;top:664.8px;transform:scaleX(0.85);transform-origin:0 0">KSMF</div>
<div class="cell" style="left:255px;top:664.8px">Sacramento International Ai…</div>
<div class="cell" style="left:455px;top:664.8px">Sacramento</div>
<div class="cell" style="left:655px;top:664.8px">United States</div>
<div class="cell" style="left:855px;top:664.8px;font-size:12.7px">"38.69540024,-121.5910034"</div>
<div class="cell" style="left:1055px;top:664.8px;transform:scaleX(0.87);transform-origin:0 0">SMF</div>
<div class="row" style="top:689px"></div>
<div class="cb" style="left:10px;top:700px"></div>
<div class="pl" style="left:55px;top:698px"><div class="abs" style="left:1.5px;top:1.5px"><svg width="17" height="17" viewBox="0 0 24 24"><path fill="#fff" d="M21.5,3.2 C20.7,2.4 19.4,2.5 18.5,3.4 L14.6,7.3 L5,4.4 L3.3,6.1 L11.1,10.8 L7.5,14.4 L4.6,14 L3.4,15.2 L6.8,17.2 L8.8,20.6 L10,19.4 L9.6,16.5 L13.2,12.9 L17.9,20.7 L19.6,19 L16.7,9.4 L20.6,5.5 C21.5,4.6 22.3,4 21.5,3.2 Z"/></svg></div></div>
<div class="cell" style="left:81.5px;top:700.8px;transform:scaleX(0.85);transform-origin:0 0">VABB</div>
<div class="cell" style="left:255px;top:700.8px">Chhatrapati Shivaji Internati…</div>
<div class="cell" style="left:455px;top:700.8px">Mumbai</div>
<div class="cell" style="left:655px;top:700.8px">India</div>
<div class="cell" style="left:855px;top:700.8px;font-size:12.7px">"19.08869934,72.86789703"</div>
<div class="cell" style="left:1055px;top:700.8px;transform:scaleX(0.87);transform-origin:0 0">BOM</div>
<div class="row" style="top:725px"></div>
<div class="cb" style="left:10px;top:736px"></div>
<div class="pl" style="left:55px;top:734px"><div class="abs" style="left:1.5px;top:1.5px"><svg width="17" height="17" viewBox="0 0 24 24"><path fill="#fff" d="M21.5,3.2 C20.7,2.4 19.4,2.5 18.5,3.4 L14.6,7.3 L5,4.4 L3.3,6.1 L11.1,10.8 L7.5,14.4 L4.6,14 L3.4,15.2 L6.8,17.2 L8.8,20.6 L10,19.4 L9.6,16.5 L13.2,12.9 L17.9,20.7 L19.6,19 L16.7,9.4 L20.6,5.5 C21.5,4.6 22.3,4 21.5,3.2 Z"/></svg></div></div>
<div class="cell" style="left:81.5px;top:736.8px;transform:scaleX(0.85);transform-origin:0 0">KTUS</div>
<div class="cell" style="left:255px;top:736.8px">Tucson International Airport</div>
<div class="cell" style="left:455px;top:736.8px">Tucson</div>
<div class="cell" style="left:655px;top:736.8px">United States</div>
<div class="cell" style="left:855px;top:736.8px;font-size:12.7px">"32.11610031,-110.9410019"</div>
<div class="cell" style="left:1055px;top:736.8px;transform:scaleX(0.87);transform-origin:0 0">TUS</div>
<div class="row" style="top:761px"></div>
<div class="cb" style="left:10px;top:772px"></div>
<div class="pl" style="left:55px;top:770px"><div class="abs" style="left:1.5px;top:1.5px"><svg width="17" height="17" viewBox="0 0 24 24"><path fill="#fff" d="M21.5,3.2 C20.7,2.4 19.4,2.5 18.5,3.4 L14.6,7.3 L5,4.4 L3.3,6.1 L11.1,10.8 L7.5,14.4 L4.6,14 L3.4,15.2 L6.8,17.2 L8.8,20.6 L10,19.4 L9.6,16.5 L13.2,12.9 L17.9,20.7 L19.6,19 L16.7,9.4 L20.6,5.5 C21.5,4.6 22.3,4 21.5,3.2 Z"/></svg></div></div>
<div class="cell" style="left:81.5px;top:772.8px;transform:scaleX(0.85);transform-origin:0 0">KAUS</div>
<div class="cell" style="left:255px;top:772.8px">Austin Bergstrom Internatio…</div>
<div class="cell" style="left:455px;top:772.8px">Austin</div>
<div class="cell" style="left:655px;top:772.8px">United States</div>
<div class="cell" style="left:855px;top:772.8px;font-size:12.7px">"30.19449997,-97.66989899"</div>
<div class="cell" style="left:1055px;top:772.8px;transform:scaleX(0.87);transform-origin:0 0">AUS</div>
<div class="row" style="top:797px"></div>
</div>
</body></html>
